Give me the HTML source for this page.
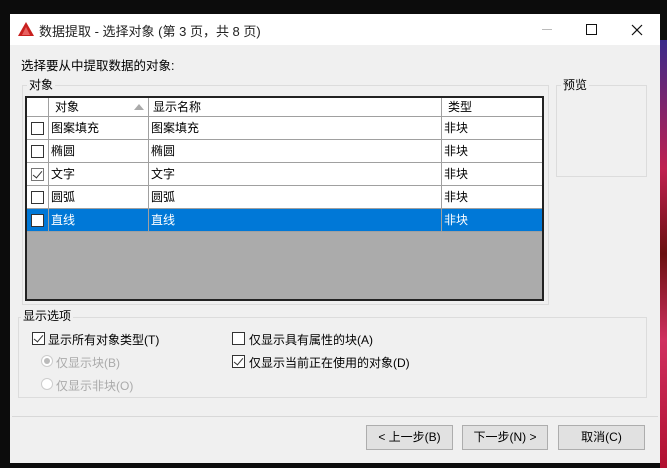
<!DOCTYPE html>
<html><head><meta charset="utf-8"><style>
*{box-sizing:border-box;margin:0;padding:0}
body{width:667px;height:468px;background:#0c0c0c;position:relative;overflow:hidden;font-family:"Liberation Sans","Noto Sans CJK SC",sans-serif;font-size:12px;color:#000}
.a{position:absolute}
.win{left:10px;top:14px;width:650px;height:449px;background:#f0f0f0}
.title{left:10px;top:14px;width:650px;height:31px;background:#fff}
.grp{border:1px solid #dcdcdc}
.lbl{background:#f0f0f0;padding:0 2px;line-height:14px}
.cb{width:13px;height:13px;border:1px solid #333;background:#fff}
.cell{position:absolute;top:0;height:100%;border-right:1px solid #a0a0a0;padding-left:2px;line-height:22px}
.row{position:absolute;left:0;width:515px;height:23px;background:#fff;border-bottom:1px solid #a0a0a0}
.btn{border:1px solid #adadad;background:#e1e1e1;height:25px;text-align:center;line-height:23px}
.chk::after{content:"";position:absolute;left:3px;top:0px;width:4px;height:8px;border:solid #333;border-width:0 1.5px 1.5px 0;transform:rotate(40deg)}
</style></head><body>
<div class="a" style="left:660px;top:40px;width:7px;height:428px;background:linear-gradient(#3a2a8a,#c02050 30%,#6a1010 50%,#d03060 70%,#b01030)"></div>
<div class="a win"></div>
<div class="a title"></div>
<svg class="a" style="left:18px;top:22px" width="16" height="14"><polygon points="8,0 16,14 0,14" fill="#c8201e"/><polygon points="8,5 12,13 4,13" fill="#e86060"/></svg>
<div class="a" style="left:39px;top:21px;font-size:13px;color:#222">数据提取 - 选择对象 (第 3 页，共 8 页)</div>
<div class="a" style="left:542px;top:29px;width:10px;height:1px;background:#bbb"></div>
<div class="a" style="left:586px;top:24px;width:11px;height:11px;border:1px solid #111"></div>
<svg class="a" style="left:631px;top:24px" width="12" height="12"><path d="M1 1L11 11M11 1L1 11" stroke="#111" stroke-width="1.2"/></svg>
<div class="a" style="left:21px;top:55px;font-size:12.5px">选择要从中提取数据的对象:</div>
<div class="a grp" style="left:22px;top:85px;width:527px;height:220px"></div>
<div class="a lbl" style="left:27px;top:78px">对象</div>
<div class="a grp" style="left:556px;top:85px;width:91px;height:92px"></div>
<div class="a lbl" style="left:561px;top:78px">预览</div>
<div class="a" style="left:25px;top:96px;width:519px;height:205px;border:2px solid #222;background:#ababab">
 <div class="row" style="top:0;height:19px">
  <div class="cell" style="left:0;width:22px"></div>
  <div class="cell" style="left:22px;width:100px;line-height:18px;padding-left:6px">对象<span style="position:absolute;right:4px;top:6px;width:0;height:0;border:5px solid transparent;border-bottom:6px solid #aaa;border-top:0"></span></div>
  <div class="cell" style="left:122px;width:293px;line-height:18px;padding-left:4px">显示名称</div>
  <div class="cell" style="left:415px;width:100px;border:0;line-height:18px;padding-left:6px">类型</div>
 </div>
 <div class="row" style="top:19px"><div class="cell" style="left:0;width:22px"><div class="cb a" style="left:4px;top:5px"></div></div><div class="cell" style="left:22px;width:100px">图案填充</div><div class="cell" style="left:122px;width:293px">图案填充</div><div class="cell" style="left:415px;width:100px;border:0">非块</div></div>
 <div class="row" style="top:42px"><div class="cell" style="left:0;width:22px"><div class="cb a" style="left:4px;top:5px"></div></div><div class="cell" style="left:22px;width:100px">椭圆</div><div class="cell" style="left:122px;width:293px">椭圆</div><div class="cell" style="left:415px;width:100px;border:0">非块</div></div>
 <div class="row" style="top:65px"><div class="cell" style="left:0;width:22px"><div class="cb a chk" style="left:4px;top:5px;border-color:#777"></div></div><div class="cell" style="left:22px;width:100px">文字</div><div class="cell" style="left:122px;width:293px">文字</div><div class="cell" style="left:415px;width:100px;border:0">非块</div></div>
 <div class="row" style="top:88px"><div class="cell" style="left:0;width:22px"><div class="cb a" style="left:4px;top:5px"></div></div><div class="cell" style="left:22px;width:100px">圆弧</div><div class="cell" style="left:122px;width:293px">圆弧</div><div class="cell" style="left:415px;width:100px;border:0">非块</div></div>
 <div class="row" style="top:111px;background:#0078d7;color:#fff"><div class="cell" style="left:0;width:22px"><div class="cb a" style="left:4px;top:5px"></div></div><div class="cell" style="left:22px;width:100px">直线</div><div class="cell" style="left:122px;width:293px">直线</div><div class="cell" style="left:415px;width:100px;border:0">非块</div></div>
</div>
<div class="a grp" style="left:18px;top:317px;width:629px;height:81px"></div>
<div class="a lbl" style="left:21px;top:309px">显示选项</div>
<div class="a cb chk" style="left:32px;top:332px"></div><div class="a" style="left:48px;top:331px">显示所有对象类型(T)</div>
<div class="a" style="left:41px;top:355px;width:12px;height:12px;border-radius:50%;border:1px solid #ccc;background:#fff"><div class="a" style="left:2px;top:2px;width:6px;height:6px;border-radius:50%;background:#bbb"></div></div><div class="a" style="left:56px;top:354px;color:#aaa">仅显示块(B)</div>
<div class="a" style="left:41px;top:378px;width:12px;height:12px;border-radius:50%;border:1px solid #ccc;background:#fff"></div><div class="a" style="left:56px;top:377px;color:#aaa">仅显示非块(O)</div>
<div class="a cb" style="left:232px;top:332px"></div><div class="a" style="left:249px;top:331px">仅显示具有属性的块(A)</div>
<div class="a cb chk" style="left:232px;top:355px"></div><div class="a" style="left:249px;top:354px">仅显示当前正在使用的对象(D)</div>
<div class="a" style="left:12px;top:416px;width:646px;height:1px;background:#d8d8d8"></div>
<div class="a btn" style="left:366px;top:425px;width:87px">&lt; 上一步(B)</div>
<div class="a btn" style="left:462px;top:425px;width:86px">下一步(N) &gt;</div>
<div class="a btn" style="left:558px;top:425px;width:87px">取消(C)</div>
</body></html>
